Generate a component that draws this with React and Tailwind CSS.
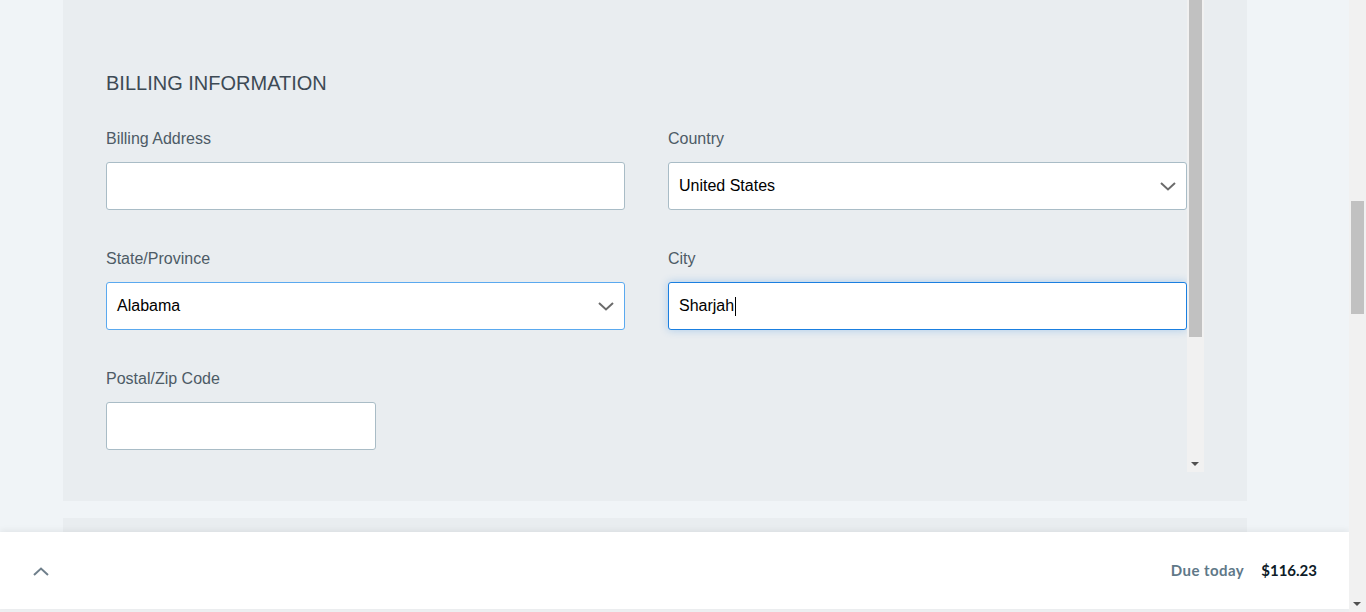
const labelCls = 'mt-[2px] block h-5 text-[16px] leading-5 text-[#4d5b66]';
const inputCls =
  'mt-[13px] h-12 w-full rounded-[3px] border bg-white px-[10px] text-[16px] text-black outline-none';

function Chevron({ up = false, className = '' }) {
  return (
    <svg width="16" height="9" viewBox="0 0 16 9" fill="none" className={className}>
      <polyline
        points={up ? '1,8 8,1.5 15,8' : '1,1 8,7.5 15,1'}
        stroke="currentColor"
        strokeWidth="2"
      />
    </svg>
  );
}

function Field({ label, children, className = '' }) {
  return (
    <div className={className}>
      <label className={labelCls}>{label}</label>
      {children}
    </div>
  );
}

function SelectBox({ value, border }) {
  return (
    <div className={`${inputCls} ${border} flex items-center justify-between`}>
      <span>{value}</span>
      <Chevron className="text-[#6b6b6b]" />
    </div>
  );
}

function Scrollbar({ thumbTop, thumbHeight, className = '' }) {
  return (
    <div className={`relative w-[17px] shrink-0 bg-[#f1f1f1] ${className}`}>
      <div
        className="absolute left-[2px] w-[13px] bg-[#c1c1c1]"
        style={{ top: thumbTop, height: thumbHeight }}
      />
      <div className="absolute bottom-[6px] left-[4px] h-0 w-0 border-x-[4px] border-t-[4px] border-x-transparent border-t-[#505050]" />
    </div>
  );
}

export default function App() {
  return (
    <div
      className="flex h-[612px] w-full overflow-hidden bg-[#f0f4f7]"
      style={{ fontFamily: '"Liberation Sans", Arial, sans-serif' }}
    >
      <div className="flex w-[1349px] shrink-0 flex-col">
        {/* page content */}
        <div className="flex h-[532px] flex-col pl-[63px]">
          <div className="flex h-[501px] w-[1184px] shrink-0 bg-[#e9edf0]">
            <div className="flex h-[472px] w-[1141px]">
              <div className="flex-1 pl-[43px] pt-[71px]">
                <h2 className="h-6 text-[20px] leading-6 text-[#3d4a55]">BILLING INFORMATION</h2>
                <div className="mt-[32px] grid grid-cols-2 gap-x-[43px] gap-y-[37px]">
                  <Field label="Billing Address">
                    <input className={`${inputCls} border-[#a9bcc6]`} />
                  </Field>
                  <Field label="Country">
                    <SelectBox value="United States" border="border-[#a9bcc6]" />
                  </Field>
                  <Field label="State/Province">
                    <SelectBox value="Alabama" border="border-[#5aa9ef]" />
                  </Field>
                  <Field label="City">
                    <div
                      className={`${inputCls} flex items-center border-[#1a7fe0] shadow-[0_0_8px_rgba(26,127,224,0.3)]`}
                    >
                      <span>Sharjah</span>
                      <span className="ml-[1px] h-[19px] w-px bg-black" />
                    </div>
                  </Field>
                  <Field label="Postal/Zip Code">
                    <input className={`${inputCls} border-[#a9bcc6]`} style={{ width: 270 }} />
                  </Field>
                </div>
              </div>
              <Scrollbar thumbTop={0} thumbHeight={337} className="h-[472px]" />
            </div>
          </div>
          <div className="mt-[17px] h-[14px] w-[1184px] bg-[#e9edf0]" />
        </div>

        {/* bottom bar */}
        <div
          className="relative flex h-[77px] items-center justify-between bg-white pl-[33px] pr-[32px] shadow-[0_-2px_6px_rgba(0,0,0,0.06)]"
          style={{ fontFamily: 'Lato, "Open Sans", sans-serif' }}
        >
          <Chevron up className="mt-[2px] text-[#6f7f8b]" />
          <div className="flex items-center gap-[17px] text-[15px] font-bold">
            <span className="tracking-[0.45px] text-[#5f7888]">Due today</span>
            <span className="text-[#0e1c28]">$116.23</span>
          </div>
        </div>
        <div className="flex-1 bg-[#eef0f2]" />
      </div>
      <Scrollbar thumbTop={201} thumbHeight={113} className="h-[612px] bg-[#f0f0f0]" />
    </div>
  );
}
